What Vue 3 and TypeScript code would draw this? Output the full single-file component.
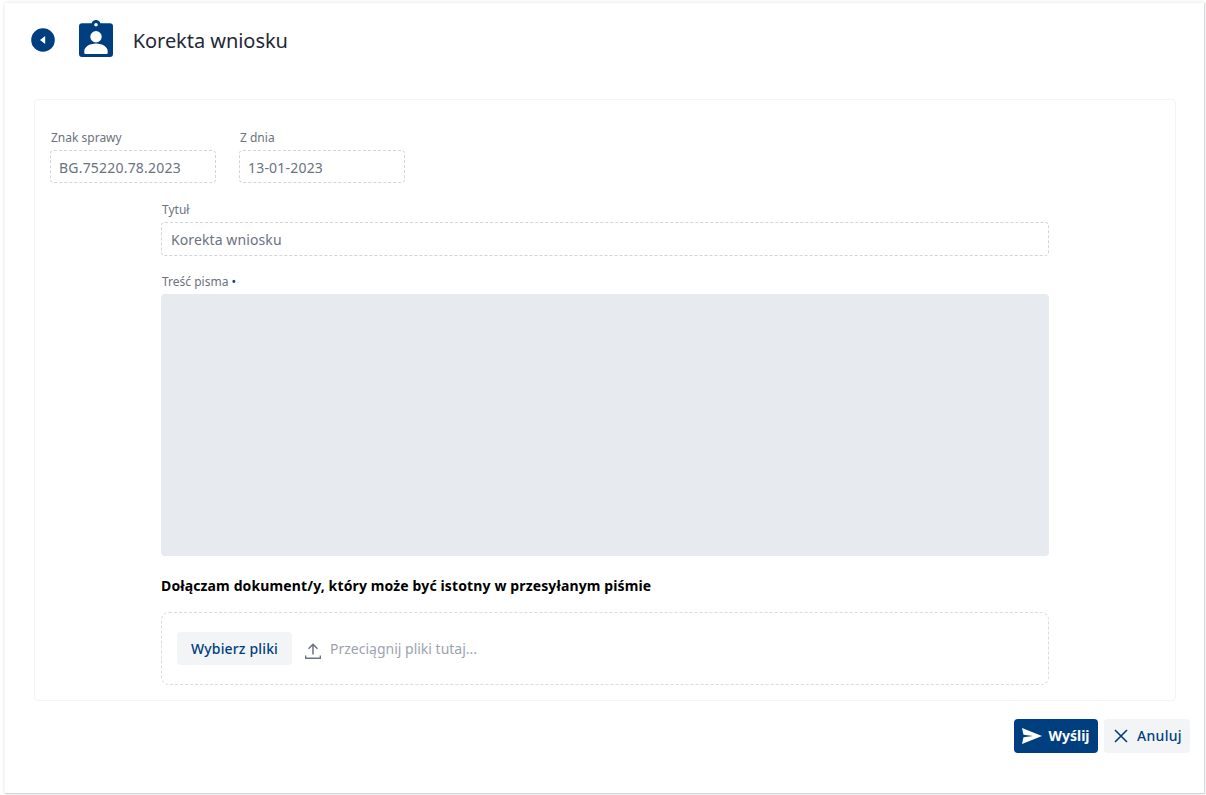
<script setup lang="ts">
const topFields: { label: string; value: string }[] = [
  { label: 'Znak sprawy', value: 'BG.75220.78.2023' },
  { label: 'Z dnia', value: '13-01-2023' },
]
</script>

<template>
  <div class="page">
    <main class="card">
      <header class="head">
        <button class="back" aria-label="Wstecz">
          <svg width="24" height="24" viewBox="0 0 24 24"><circle cx="12" cy="12" r="11.800" fill="#003f7f" /><path d="M14.200 8v8L9 12z" fill="#fff" /></svg>
        </button>
        <svg class="badge" width="34" height="37" viewBox="0 0 34 37">
          <path fill="#003f7f" fill-rule="evenodd" d="M3 3.300h9.500a4.700 4.700 0 0 1 9 0H31a3 3 0 0 1 3 3V34a3 3 0 0 1-3 3H3a3 3 0 0 1-3-3V6.300a3 3 0 0 1 3-3zM17 2.900a1.800 1.800 0 1 0 0 3.600 1.800 1.800 0 0 0 0-3.600zM17 11a5.700 5.700 0 1 0 0 11.400A5.700 5.700 0 0 0 17 11zM6.300 34h21.400a1 1 0 0 0 1-1v-2.200c0-3.600-5-7.300-11.700-7.300S5.300 27.200 5.300 30.800V33a1 1 0 0 0 1 1z" />
        </svg>
        <h1>Korekta wniosku</h1>
      </header>

      <section class="panel">
        <div class="top-row">
          <div v-for="f in topFields" :key="f.label" class="field short">
            <label>{{ f.label }}</label>
            <div class="input small">{{ f.value }}</div>
          </div>
        </div>

        <div class="center">
          <div class="field title-field">
            <label>Tytuł</label>
            <div class="input">Korekta wniosku</div>
          </div>
          <div class="field body-field">
            <label>Treść pisma <span class="dot">•</span></label>
            <div class="editor"></div>
          </div>
          <p class="attach">Dołączam dokument/y, który może być istotny w przesyłanym piśmie</p>
          <div class="drop">
            <button class="btn light pick">Wybierz pliki</button>
            <svg class="upload" width="16" height="18" viewBox="0 0 16 18" fill="none" stroke="#6b7280" stroke-width="1.500">
              <path d="M8 12.500V2.500M3.500 6.800 8 2.300l4.500 4.500" />
              <path d="M.6 13.500v2.700h14.800v-2.700" />
            </svg>
            <span class="hint">Przeciągnij pliki tutaj...</span>
          </div>
        </div>
      </section>

      <footer class="actions">
        <button class="btn primary">
          <svg width="20" height="16" viewBox="0 0 20 16"><path fill="#fff" d="M0 0l20 8-20 8 1.500-6.800L11 8 1.500 6.800z" /></svg>
          <span>Wyślij</span>
        </button>
        <button class="btn light cancel">
          <svg width="14" height="14" viewBox="0 0 14 14" fill="none" stroke="#003f7f" stroke-width="1.600"><path d="M1 1l12 12M13 1 1 13" /></svg>
          <span>Anuluj</span>
        </button>
      </footer>
    </main>
  </div>
</template>

<style>
html, body { margin: 0; background: #fff; }
</style>

<style scoped>
.page {
  height: 795px;
  box-sizing: border-box;
  padding: 3px 1px 1px 5px;
  background: #fff;
  font-family: "Noto Sans", sans-serif;
  overflow: hidden;
}
.card {
  height: 791px;
  box-sizing: border-box;
  background: #fff;
  border-right: 1px solid #d8dbe0;
  border-bottom: 1px solid #d1d5db;
  box-shadow: 0 0 5px rgba(17, 24, 39, 0.12);
  padding: 0 14px 0 29px;
  display: flex;
  flex-direction: column;
}
.head {
  height: 96px;
  margin-left: -2.700px;
  display: flex;
  align-items: flex-start;
  padding-top: 17px;
  box-sizing: border-box;
}
.back {
  border: 0;
  padding: 0;
  background: none;
  width: 24px;
  height: 24px;
  margin-top: 8px;
  display: block;
}
.back svg { display: block; }
.badge { margin-left: 23.400px; }
h1 {
  margin: 6px 0 0 20px;
  font-size: 20px;
  line-height: 30px;
  font-weight: 400;
  color: #1f2937;
  letter-spacing: -0.05px;
}
.panel {
  width: 1142px;
  height: 602px;
  box-sizing: border-box;
  border: 1px solid #f3f4f6;
  border-radius: 4px;
  padding: 30px 15px 15px;
}
.top-row {
  display: flex;
  gap: 23px;
}
.field label {
  display: block;
  font-size: 12px;
  line-height: 16px;
  color: #6b7280;
  padding-left: 1px;
  margin-bottom: 4px;
}
.short { width: 166px; }
.input {
  height: 34px;
  box-sizing: border-box;
  border: 1px dashed #d1d5db;
  border-radius: 4px;
  padding: 0 9px;
  font-size: 14px;
  line-height: 33px;
  color: #6b7280;
  letter-spacing: 0.1px;
}
.input.small { height: 33px; line-height: 33px; padding: 0 8px; letter-spacing: 0.2px; }
.center {
  width: 888px;
  margin: 19px 0 0 111px;
}
.body-field { margin-top: 18px; }
.dot { color: #003f7f; }
.editor {
  height: 262px;
  background: #e7eaef;
  border-radius: 4px;
}
.attach {
  margin: 20px 0 16px;
  font-size: 14px;
  line-height: 20px;
  font-weight: 700;
  color: #000;
  letter-spacing: 0.13px;
}
.drop {
  height: 73px;
  box-sizing: border-box;
  border: 1px dashed #d9dce1;
  border-radius: 8px;
  padding: 0 15px;
  display: flex;
  align-items: center;
}
.btn {
  border: 0;
  border-radius: 4px;
  font-family: inherit;
  font-size: 14px;
  line-height: 20px;
  display: flex;
  align-items: center;
  justify-content: center;
  padding: 0;
}
.light { background: #f3f4f6; color: #003f7f; font-weight: 500; letter-spacing: 0.15px; }
.pick { width: 115px; height: 33px; }
.upload { margin: 5px 0 0 13px; }
.hint {
  margin-left: 9px;
  font-size: 14px;
  color: #9ca3af;
}
.actions {
  display: flex;
  justify-content: flex-end;
  gap: 6px;
  margin-top: 18px;
}
.primary {
  width: 84px;
  height: 34px;
  background: #003f7f;
  color: #fff;
  font-weight: 700;
  gap: 6px;
}
.cancel { width: 86px; height: 34px; gap: 9px; padding-left: 2px; box-sizing: border-box; letter-spacing: 0.3px; }
</style>
